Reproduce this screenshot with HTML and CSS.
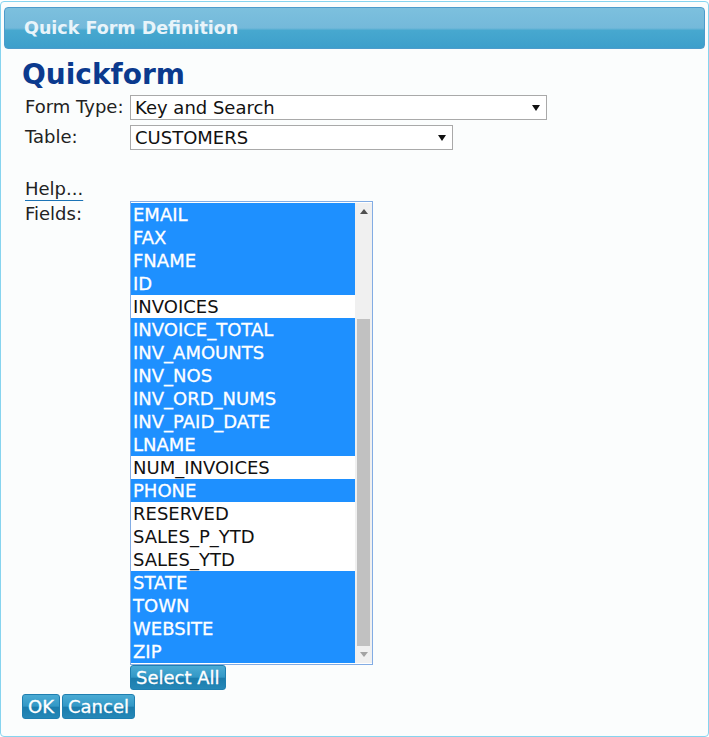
FILE: index.html
```html
<!DOCTYPE html>
<html lang="en">
  <head>
    <meta charset="UTF-8" />
    <meta name="viewport" content="width=device-width, initial-scale=1.0" />
    <title>Quick Form Definition</title>
    <link rel="stylesheet" href="styles.css">
  </head>
  <body>
    <div class="panel">
      <div class="panel-header">Quick Form Definition</div>
      <div class="panel-body">
        <h1 class="title">Quickform</h1>
        <div class="form-grid">
          <label class="lbl">Form Type:</label>
          <div class="select wide">
            <span>Key and Search</span>
            <svg width="8" height="6" viewBox="0 0 8 6"><path d="M0 0 L8 0 L4 6 Z" fill="#111"/></svg>
          </div>
          <label class="lbl">Table:</label>
          <div class="select narrow">
            <span>CUSTOMERS</span>
            <svg width="8" height="6" viewBox="0 0 8 6"><path d="M0 0 L8 0 L4 6 Z" fill="#111"/></svg>
          </div>

          <a class="help" href="#">Help...</a>
          <div class="spacer"></div>

          <label class="lbl fields-lbl">Fields:</label>
          <div class="fields">
            <div class="listbox">
              <ul class="options">
                <li class="sel">EMAIL</li>
                <li class="sel">FAX</li>
                <li class="sel">FNAME</li>
                <li class="sel">ID</li>
                <li>INVOICES</li>
                <li class="sel">INVOICE_TOTAL</li>
                <li class="sel">INV_AMOUNTS</li>
                <li class="sel">INV_NOS</li>
                <li class="sel">INV_ORD_NUMS</li>
                <li class="sel">INV_PAID_DATE</li>
                <li class="sel">LNAME</li>
                <li>NUM_INVOICES</li>
                <li class="sel">PHONE</li>
                <li>RESERVED</li>
                <li>SALES_P_YTD</li>
                <li>SALES_YTD</li>
                <li class="sel">STATE</li>
                <li class="sel">TOWN</li>
                <li class="sel">WEBSITE</li>
                <li class="sel">ZIP</li>
              </ul>
              <div class="scrollbar">
                <div class="arrow"><svg width="8" height="5" viewBox="0 0 8 5"><path d="M0 5 L8 5 L4 0 Z" fill="#505050"/></svg></div>
                <div class="track"><div class="thumb"></div></div>
                <div class="arrow"><svg width="8" height="5" viewBox="0 0 8 5"><path d="M0 0 L8 0 L4 5 Z" fill="#a3a3a3"/></svg></div>
              </div>
            </div>
            <button class="btn select-all">Select All</button>
          </div>
        </div>
        <div class="actions">
          <button class="btn">OK</button>
          <button class="btn">Cancel</button>
        </div>
      </div>
    </div>
  </body>
</html>
```

FILE: styles.css
```css
* {
  margin: 0;
  padding: 0;
  box-sizing: border-box;
}
body {
  background-color: white;
  font-family: "DejaVu Sans", Verdana, sans-serif;
  font-size: 18px;
  color: #222;
}
.panel {
  margin-top: 1px;
  width: 709px;
  height: 736px;
  border: 1px solid #86d4ef;
  border-radius: 4px;
  background-color: #fbfdfd;
}
.panel-header {
  margin: 5px 3px 0;
  height: 42px;
  line-height: 40px;
  padding-left: 19px;
  border: 1px solid #4d9bcb;
  border-radius: 4px;
  background: linear-gradient(to bottom, #7cc0de 0%, #74b9da 50%, #47a8cf 56%, #3d9fcb 100%);
  color: #e8f4fa;
  font-weight: bold;
  font-size: 17.5px;
}
.panel-body {
  padding-left: 21px;
}
.title {
  margin-top: 10px;
  font-size: 28px;
  line-height: 32px;
  color: #0b3a8e;
}
.form-grid {
  margin-top: 4px;
  margin-left: 3px;
  display: grid;
  grid-template-columns: 105px auto;
  row-gap: 5px;
  align-items: start;
}
.lbl {
  line-height: 23px;
}
.select {
  display: flex;
  align-items: center;
  justify-content: space-between;
  height: 25px;
  padding: 0 6px 0 4px;
  border: 1px solid #a9a9a9;
  background-color: white;
  color: #111;
}
.select.wide {
  width: 417px;
}
.select.narrow {
  width: 323px;
}
.help {
  margin-top: 22px;
  line-height: 23px;
  color: #222;
  text-decoration: underline;
  text-decoration-color: #1b73b6;
  text-underline-offset: 5px;
  justify-self: start;
}
.spacer {
  margin-top: 22px;
}
.fields-lbl {
  margin-top: -3px;
}
.fields {
  margin-top: -4px;
}
.listbox {
  display: flex;
  width: 243px;
  height: 464px;
  border: 1px solid #82ace4;
  background-color: white;
  padding: 1px 0;
}
.options {
  list-style: none;
  width: 224px;
}
.options li {
  height: 23px;
  line-height: 23px;
  padding-left: 2px;
  color: #111;
}
.options li.sel {
  background-color: #1e90ff;
  color: white;
  -webkit-text-stroke: 0.3px white;
}
.scrollbar {
  width: 17px;
  display: flex;
  flex-direction: column;
  background-color: #f0f0f0;
}
.arrow {
  height: 17px;
  display: flex;
  align-items: center;
  justify-content: center;
}
.track {
  flex: 1;
  padding: 0 2px;
}
.thumb {
  margin-top: 99px;
  height: 327px;
  background-color: #c1c1c1;
}
.btn {
  height: 25px;
  padding: 0 5px;
  border: 1px solid #1f7fb0;
  border-radius: 3px;
  background: linear-gradient(to bottom, #4aabd4 0%, #3398c6 48%, #1b7cac 54%, #2588b8 100%);
  color: white;
  font-family: "DejaVu Sans", Verdana, sans-serif;
  font-size: 18px;
  line-height: 23px;
  -webkit-text-stroke: 0.3px white;
}
.select-all {
  display: block;
}
.actions {
  display: flex;
  gap: 2px;
  margin-top: 4px;
}
```
